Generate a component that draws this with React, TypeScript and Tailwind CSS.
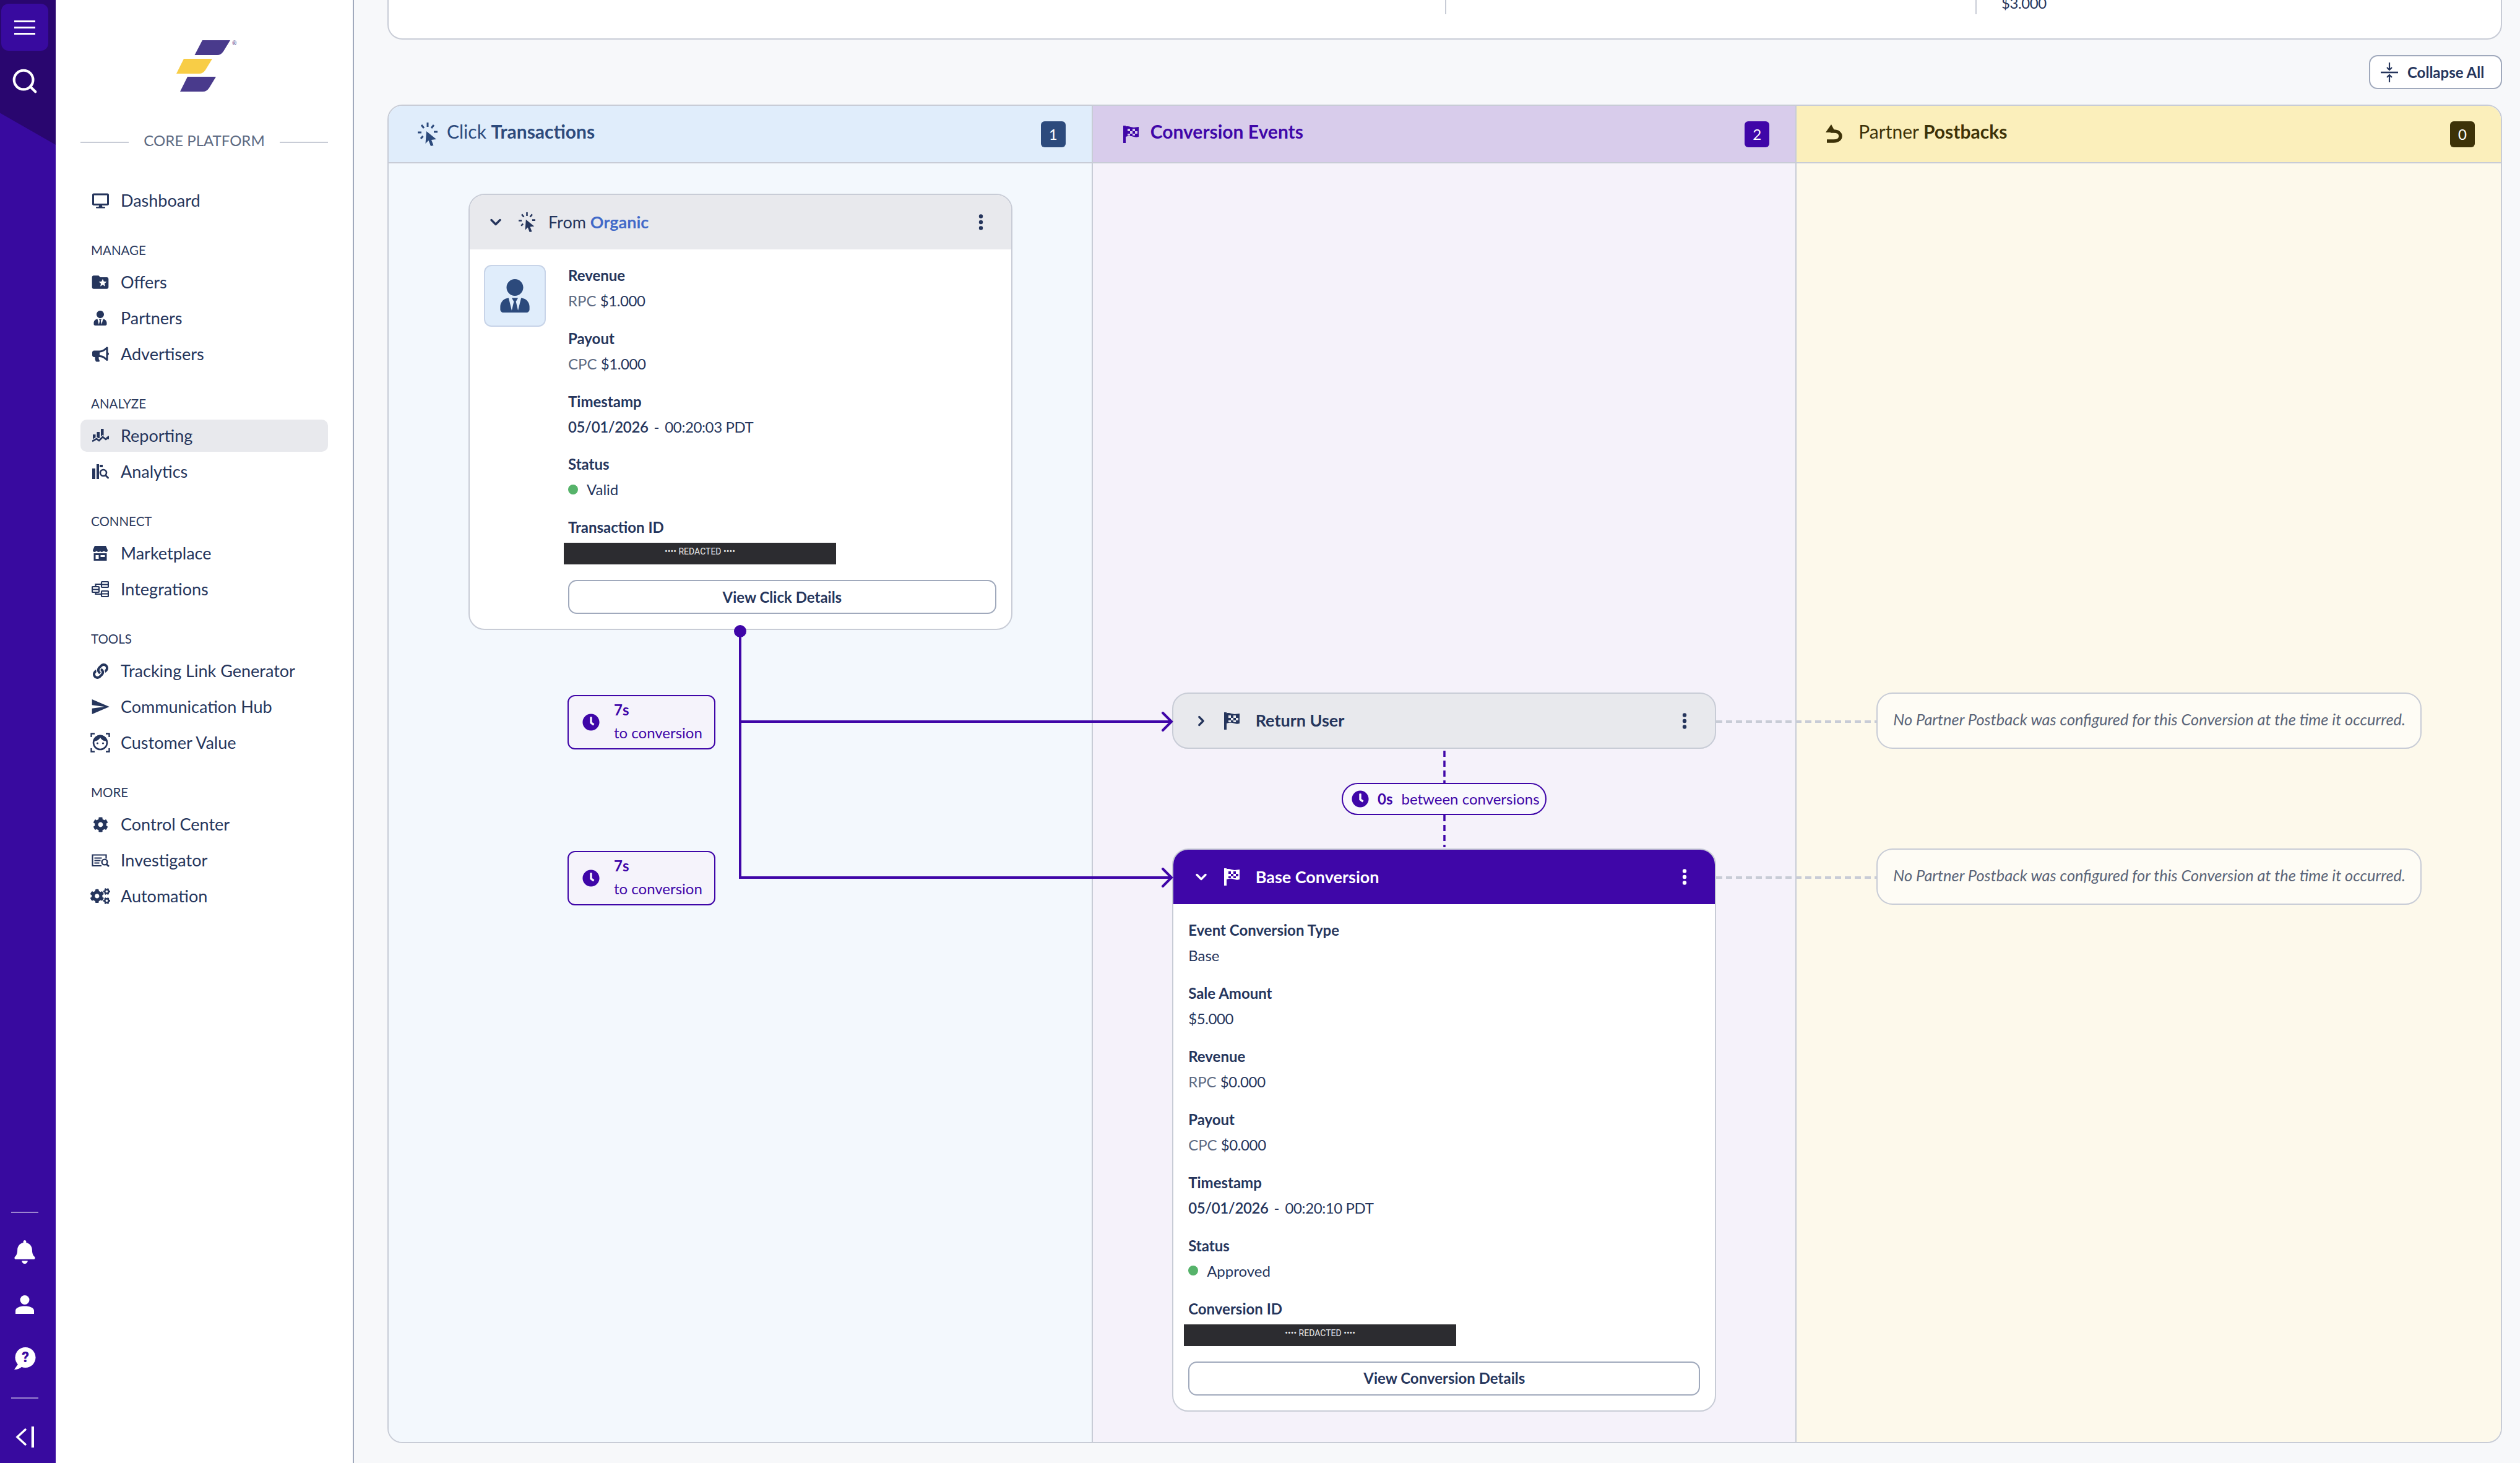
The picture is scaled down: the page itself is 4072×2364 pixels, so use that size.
import React from "react";
import {
  FaBell,
  FaBullhorn,
  FaClock,
  FaCog,
  FaCogs,
  FaDesktop,
  FaLink,
  FaUserTie,
} from "react-icons/fa";
import { MdFolderSpecial, MdSend } from "react-icons/md";
import { ChevronDown, ChevronRight, Search } from "lucide-react";

const PURPLE = "#3f06a8";
const NAVY = "#25355c";

// Small hand drawn icons
const ClickIcon = ({ width, height, color }: { width: number; height: number; color: string }) => (
  <svg width={width} height={height} viewBox="0 0 32 38" fill="none">
    <path
      d="M16 0v7M6 4l4 5M26 4l-4 5M0 16h6M5 26l3.500-4M26 15h6"
      stroke={color}
      strokeWidth="3"
    />
    <path d="M14 14l16 13-8 1 3.500 9-4.500 1-3.500-9-5 5z" fill={color} />
  </svg>
);

const FlagIcon = ({ color }: { color: string }) => (
  <svg width="25" height="28" viewBox="0 0 25 28" className="shrink-0">
    <rect x="0" y="0" width="4" height="28" fill={color} />
    <path
      fill={color}
      fillRule="evenodd"
      d="M4 1.500C9 0 12 3 17 3l8-1v16c-3 1-5 1-8 0-5-1.500-8-2-13 0zM7 5v4h4V5zM15 5v4h4V5zM11 9v4h4V9zM19 9v4h4V9zM7 13v3h4v-3zM15 13v3h4v-3z"
    />
  </svg>
);

const Kebab = ({ color }: { color: string }) => (
  <svg width="8" height="26" viewBox="0 0 8 26" fill={color}>
    <circle cx="4" cy="3.500" r="3.200" />
    <circle cx="4" cy="13" r="3.200" />
    <circle cx="4" cy="22.500" r="3.200" />
  </svg>
);

const ReportingIcon = () => (
  <svg width="27" height="22" viewBox="0 0 27 22" fill={NAVY}>
    <rect x="1" y="9" width="4.500" height="8" />
    <rect x="7.500" y="5" width="4.500" height="10" />
    <rect x="14" y="0" width="4.500" height="13" />
    <path d="M0 20l7-4 4 3 6-6 5 4 3-2" fill="none" stroke="#e8e9ed" strokeWidth="5" />
    <path d="M0 20l7-4 4 3 6-6 5 4 3-2" fill="none" stroke={NAVY} strokeWidth="2.600" />
    <path d="M27 11v6l-5-3z" />
  </svg>
);

const AnalyticsIcon = () => (
  <svg width="27" height="24" viewBox="0 0 27 24" fill="none">
    <rect x="0" y="7" width="5" height="17" fill={NAVY} />
    <rect x="7" y="0" width="4" height="24" fill={NAVY} />
    <rect x="12" y="1" width="5" height="4" fill={NAVY} />
    <circle cx="18" cy="14" r="5" stroke={NAVY} strokeWidth="2.600" />
    <path d="M21.500 18l5 5" stroke={NAVY} strokeWidth="2.800" />
  </svg>
);

const MarketplaceIcon = () => (
  <svg width="24" height="24" viewBox="0 0 24 24" fill={NAVY}>
    <path d="M3 0h18l3 7c0 2-1 3-2.500 3S19 9 18 8c-1 1-2.500 2-4 2s-1.500-1-2-2c-.5 1-1 2-2.500 2S7 9 6 8c-1 1-2 2-3.500 2S0 9 0 7z" />
    <path d="M1.500 12h21v12h-21zM4.500 15v6h5v-6zM12.500 15v3h7v-3z" fillRule="evenodd" />
  </svg>
);

const IntegrationsIcon = () => (
  <svg width="28" height="28" viewBox="0 0 28 28" fill="none" stroke={NAVY} strokeWidth="2.200">
    <rect x="1" y="10" width="11" height="9" rx="1" />
    <rect x="16" y="2" width="11" height="9" rx="1" />
    <rect x="16" y="17" width="11" height="9" rx="1" />
    <path d="M6.500 10V6h9.500M6.500 19v3h9.500M1 14.500h11M16 6.500h11M16 21.500h11" />
  </svg>
);

const CustomerIcon = () => (
  <svg width="32" height="32" viewBox="0 0 32 32" fill="none" stroke={NAVY}>
    <path d="M1.500 7V1.500H7M25 1.500h5.500V7M1.500 25v5.500H7M25 30.500h5.500V25" strokeWidth="2.400" />
    <circle cx="16" cy="16" r="11" strokeWidth="2.600" />
    <path d="M6 13c5 0 8-2 10-6 2 4 5 6 10 6-1-6-5-9-10-9S7 7 6 13z" fill={NAVY} />
    <circle cx="11.500" cy="17" r="1.600" fill={NAVY} stroke="none" />
    <circle cx="20.500" cy="17" r="1.600" fill={NAVY} stroke="none" />
  </svg>
);

const InvestigatorIcon = () => (
  <svg width="29" height="21" viewBox="0 0 29 21" fill="none" stroke={NAVY}>
    <path d="M16 19H1.500V1.500h22v6" strokeWidth="2.200" />
    <path d="M4.500 6.500h12M4.500 10.500h10M4.500 14.500h8" strokeWidth="1.800" />
    <circle cx="21" cy="13" r="4.400" strokeWidth="2.400" />
    <path d="M24 16.500l4 3.500" strokeWidth="2.800" />
  </svg>
);

const UndoIcon = () => (
  <svg width="28" height="31" viewBox="0 0 28 31" fill="none" className="shrink-0">
    <path d="M0 13L9 0l7 13z" fill="#3d3208" />
    <path d="M8 11h5c7 0 11 3.500 11 8s-4 8-11 8H2" stroke="#3d3208" strokeWidth="5.500" />
  </svg>
);

const CollapseIcon = () => (
  <svg width="28" height="32" viewBox="0 0 28 32" fill="none" stroke={NAVY} strokeWidth="2.200" className="shrink-0">
    <path d="M14 0v12M10 8l4 4 4-4M14 32V20M10 24l4-4 4 4" />
    <path d="M0 16h28" strokeWidth="2.600" />
  </svg>
);

const Logo = () => (
  <svg width="98" height="84" viewBox="285 65 98 84" className="ml-[195px] shrink-0">
    <path d="M327 65h45l-11 18q-4 6-10 6h-36.500z" fill="#493a8c" />
    <path d="M297 95h46l-11 18q-4 6-10 6h-37z" fill="#f8cd46" />
    <path d="M303 124h46l-11 18q-4 6-10 6h-37z" fill="#493a8c" />
    <text x="375" y="73" fontSize="9" fill="#493a8c" fontFamily="Lato">®</text>
  </svg>
);

// Sidebar data
interface NavItem {
  label: string;
  icon: React.ReactNode;
  active?: boolean;
}

interface NavGroup {
  title: string;
  items: NavItem[];
}

const navGroups: NavGroup[] = [
  {
    title: "MANAGE",
    items: [
      { label: "Offers", icon: <MdFolderSpecial size={32} color={NAVY} /> },
      { label: "Partners", icon: <FaUserTie size={24} color={NAVY} /> },
      { label: "Advertisers", icon: <FaBullhorn size={27} color={NAVY} /> },
    ],
  },
  {
    title: "ANALYZE",
    items: [
      { label: "Reporting", icon: <ReportingIcon />, active: true },
      { label: "Analytics", icon: <AnalyticsIcon /> },
    ],
  },
  {
    title: "CONNECT",
    items: [
      { label: "Marketplace", icon: <MarketplaceIcon /> },
      { label: "Integrations", icon: <IntegrationsIcon /> },
    ],
  },
  {
    title: "TOOLS",
    items: [
      { label: "Tracking Link Generator", icon: <FaLink size={25} color={NAVY} /> },
      { label: "Communication Hub", icon: <MdSend size={32} color={NAVY} /> },
      { label: "Customer Value", icon: <CustomerIcon /> },
    ],
  },
  {
    title: "MORE",
    items: [
      { label: "Control Center", icon: <FaCog size={25} color={NAVY} /> },
      { label: "Investigator", icon: <InvestigatorIcon /> },
      { label: "Automation", icon: <FaCogs size={32} color={NAVY} /> },
    ],
  },
];

const NavRow = ({ label, icon, active }: NavItem) => (
  <div
    className={`flex h-[52px] items-center gap-[15px] rounded-[10px] px-[14px] ${
      active ? "bg-[#e8e9ed]" : ""
    }`}
  >
    <span className="flex w-[36px] justify-center">{icon}</span>
    <span className="text-[27px] text-[#25355c]">{label}</span>
  </div>
);

const Rail = () => (
  <aside className="relative flex w-[90px] shrink-0 flex-col items-center bg-[#380a9f] pr-[10px]">
    <div className="absolute left-0 top-0 h-[234px] w-[90px] bg-[#29066f] [clip-path:polygon(0_0,100%_0,100%_100%,0_78%)]" />
    <button className="relative mt-[6px] flex h-[76px] w-[76px] flex-col items-center justify-center gap-[7px] rounded-[12px] bg-[#380a9f]">
      <span className="h-[3px] w-[34px] bg-white" />
      <span className="h-[3px] w-[34px] bg-white" />
      <span className="h-[3px] w-[34px] bg-white" />
    </button>
    <Search size={46} color="white" strokeWidth={2.200} className="relative mt-[26px]" />

    <div className="mt-auto h-[2px] w-[44px] bg-white/50" />
    <FaBell size={38} color="white" className="mt-[44px]" />
    <svg width="30" height="30" viewBox="0 0 30 30" fill="white" className="mt-[51px]">
      <circle cx="15" cy="7.500" r="7.500" />
      <path d="M0 30v-5c0-5 7-7.500 15-7.500s15 2.500 15 7.500v5z" />
    </svg>
    <svg width="36" height="36" viewBox="0 0 36 36" className="mt-[54px]">
      <circle cx="19" cy="16.500" r="16.500" fill="white" />
      <path d="M8 26L1 36c5 0 10-2 13-5z" fill="white" />
      <text x="19" y="24" textAnchor="middle" fontSize="23" fontWeight="900" fontFamily="Roboto" fill="#380a9f">?</text>
    </svg>
    <div className="mt-[45px] h-[2px] w-[44px] bg-white/50" />
    <svg width="30" height="34" viewBox="0 0 30 34" fill="none" stroke="white" strokeWidth="3.500" className="mb-[25px] mt-[45px]">
      <path d="M17 4L3 17l14 13" />
      <path d="M28 0v34" strokeWidth="4.500" />
    </svg>
  </aside>
);

const Sidebar = () => (
  <nav className="flex w-[482px] shrink-0 flex-col border-r-2 border-[#a0a9bc] bg-white pt-[65px]">
    <Logo />
    <div className="ml-[40px] mt-[63px] flex h-[30px] w-[400px] items-center gap-[24px]">
      <span className="mt-[6px] h-[2px] flex-1 bg-[#c8ccd6]" />
      <span className="text-[24px] text-[#5d6a82]">CORE PLATFORM</span>
      <span className="mt-[6px] h-[2px] flex-1 bg-[#c8ccd6]" />
    </div>
    <div className="ml-[40px] mt-[56px] w-[400px]">
      <NavRow label="Dashboard" icon={<FaDesktop size={27} color={NAVY} />} />
      {navGroups.map((group) => (
        <div key={group.title} className="mt-[41px]">
          <div className="mb-[13px] h-[26px] pl-[17px] text-[20.500px] leading-[26px] text-[#2b3a5e]">
            {group.title}
          </div>
          <div className="flex flex-col gap-[6px]">
            {group.items.map((item) => (
              <NavRow key={item.label} {...item} />
            ))}
          </div>
        </div>
      ))}
    </div>
  </nav>
);

// Transaction cards
const Field = ({ label, children }: { label: string; children: React.ReactNode }) => (
  <div>
    <div className="text-[24px] font-bold leading-[41px] text-[#25355c]">{label}</div>
    <div className="text-[24px] leading-[41px] text-[#25355c]">{children}</div>
  </div>
);

const Money = ({ prefix, value }: { prefix: string; value: string }) => (
  <>
    <span className="text-[#5d6a82]">{prefix}</span>{" "}
    <span className="tracking-[-0.4px]">{value}</span>
  </>
);

const Timestamp = ({ date, time }: { date: string; time: string }) => (
  <>
    <span className="font-semibold tracking-[-0.4px]">{date}</span>
    <span className="mx-[9px]">-</span>
    <span className="tracking-[-0.4px]">{time}</span>
  </>
);

const Status = ({ text }: { text: string }) => (
  <span className="flex items-center gap-[14px]">
    <span className="h-[16px] w-[16px] rounded-full bg-[#56b36a]" />
    {text}
  </span>
);

const IdField = ({ label }: { label: string }) => (
  <div>
    <div className="text-[24px] font-bold leading-[41px] text-[#25355c]">{label}</div>
    <div className="-ml-[7px] mt-[5px] h-[35px] w-[440px] bg-[#2c2c30] text-center font-['Roboto',sans-serif] text-[14px] leading-[28px] text-[#e8e8ea]">
      •••• REDACTED ••••
    </div>
  </div>
);

const DetailsButton = ({ text }: { text: string }) => (
  <button className="mt-[25px] h-[55px] w-full rounded-[14px] border-2 border-[#a0a9bc] bg-white text-[24px] font-bold text-[#25355c]">
    {text}
  </button>
);

const TimeBadge = ({ className }: { className: string }) => (
  <div
    className={`absolute left-[289px] flex h-[88px] w-[239px] items-center gap-[23px] rounded-[12px] border-2 border-[#3f06a8] bg-[#f5f3fb] pl-[22px] text-[#3f06a8] ${className}`}
  >
    <FaClock size={28} />
    <div className="-translate-y-[2px] text-[24px] leading-[37px]">
      <div className="font-bold">7s</div>
      <div>to conversion</div>
    </div>
  </div>
);

const ColumnHeader = ({
  icon,
  children,
  count,
  bg,
  badge,
  gap,
}: {
  icon: React.ReactNode;
  children: React.ReactNode;
  count: number;
  bg: string;
  badge: string;
  gap: string;
}) => (
  <div className={`flex h-[93px] items-center justify-between border-b-2 border-[#c8ccd6] pl-[47px] pr-[42px] ${bg}`}>
    <div className={`flex items-center text-[30px] ${gap}`}>
      {icon}
      <span className="-translate-y-[4px]">{children}</span>
    </div>
    <span className={`flex h-[42px] w-[40px] items-center justify-center rounded-[6px] text-[24px] text-white ${badge}`}>
      {count}
    </span>
  </div>
);

const NoPostback = () => (
  <div className="flex h-[91px] items-center rounded-[26px] border-2 border-[#c8ccd6] bg-[#fefcf5] pb-[4px] pl-[25px] text-[25.400px] italic text-[#5a6478]">
    No Partner Postback was configured for this Conversion at the time it occurred.
  </div>
);

// Lines that join the cards, drawn in page coordinates
const Connectors = () => (
  <svg width="3413" height="2159" className="pointer-events-none absolute left-0 top-0">
    <g transform="translate(-628 -171)" fill="none">
      <circle cx="1196" cy="1020" r="10" fill={PURPLE} />
      <g stroke={PURPLE} strokeWidth="4">
        <path d="M1196 1020V1420M1196 1166H1893M1194 1418H1893" />
        <path d="M1879 1152l14 14-14 14M1879 1404l14 14-14 14" strokeLinecap="round" />
      </g>
      <path d="M2334 1213V1265M2334 1317V1369" stroke={PURPLE} strokeWidth="3.500" strokeDasharray="10 6" />
      <path d="M2773 1166H3034M2773 1418H3034" stroke="#c8ccd6" strokeWidth="4" strokeDasharray="10 6" />
    </g>
  </svg>
);

const App: React.FC = () => {
  return (
    <div className="flex h-[2364px] w-[4072px] overflow-hidden bg-[#f7f8fa] font-['Lato',sans-serif]">
      <Rail />
      <Sidebar />

      <main className="flex-1 pl-[54px] pr-[29px]">
        {/* Bottom of the summary card that is scrolled away */}
        <div className="flex h-[64px] rounded-b-[24px] border-2 border-t-0 border-[#c8ccd6] bg-white">
          <div className="w-[1707px] shrink-0" />
          <div className="h-[23px] w-[857px] shrink-0 border-l-2 border-[#c8ccd6]" />
          <div className="flex h-[23px] items-end overflow-hidden border-l-2 border-[#c8ccd6] pl-[40px] text-[24px] leading-[28px] text-[#25355c]">
            <span className="shrink-0 -translate-y-[4px] tracking-[-0.4px]">$3.000</span>
          </div>
        </div>

        <div className="mt-[25px] flex justify-end">
          <button className="flex h-[55px] w-[215px] items-center gap-[15px] rounded-[14px] border-2 border-[#a0a9bc] bg-white pl-[17px] text-[24px] font-bold text-[#25355c]">
            <CollapseIcon />
            Collapse All
          </button>
        </div>

        <div className="relative mt-[25px] grid h-[2163px] grid-cols-3 overflow-hidden rounded-[24px] border-2 border-[#c8ccd6]">
          {/* Click Transactions */}
          <section className="flex flex-col border-r-2 border-[#c8ccd6] bg-[#f3f8fd]">
            <ColumnHeader
              icon={<ClickIcon width={32} height={38} color="#2c4a7c" />}
              count={1}
              bg="bg-[#e0edfb] text-[#2c4a7c]"
              badge="bg-[#2c4a7c]"
              gap="gap-[15px]"
            >
              Click <span className="font-bold">Transactions</span>
            </ColumnHeader>
            <div className="pl-[129px] pr-[128px] pt-[49px]">
              <div className="overflow-hidden rounded-[26px] border-2 border-[#c8ccd6] bg-white">
                <div className="flex h-[88px] items-center bg-[#e8e9ed] pl-[28px] pr-[45px]">
                  <ChevronDown size={28} strokeWidth={3} color={NAVY} className="shrink-0" />
                  <span className="ml-[23px]">
                    <ClickIcon width={27} height={34} color={NAVY} />
                  </span>
                  <span className="ml-[21px] flex-1 text-[27px] text-[#25355c]">
                    From <span className="font-bold text-[#4169c8]">Organic</span>
                  </span>
                  <Kebab color={NAVY} />
                </div>
                <div className="flex gap-[36px] pb-[24px] pl-[23px] pr-[24px] pt-[21px]">
                  <div className="mt-[4px] flex h-[100px] w-[100px] shrink-0 items-center justify-center rounded-[12px] border-2 border-[#c8d4e8] bg-[#e0edfb]">
                    <FaUserTie size={54} color="#2c4a7c" />
                  </div>
                  <div className="flex-1">
                    <div className="flex flex-col gap-[19.800px]">
                      <Field label="Revenue">
                        <Money prefix="RPC" value="$1.000" />
                      </Field>
                      <Field label="Payout">
                        <Money prefix="CPC" value="$1.000" />
                      </Field>
                      <Field label="Timestamp">
                        <Timestamp date="05/01/2026" time="00:20:03 PDT" />
                      </Field>
                      <Field label="Status">
                        <Status text="Valid" />
                      </Field>
                      <IdField label="Transaction ID" />
                    </div>
                    <DetailsButton text="View Click Details" />
                  </div>
                </div>
              </div>
            </div>
          </section>

          {/* Conversion Events */}
          <section className="flex flex-col border-r-2 border-[#c8ccd6] bg-[#f5f2fa]">
            <ColumnHeader
              icon={<span className="ml-[2px]"><FlagIcon color={PURPLE} /></span>}
              count={2}
              bg="bg-[#d8cceb] text-[#3f06a8]"
              badge="bg-[#3f06a8]"
              gap="gap-[19px]"
            >
              <span className="font-bold">Conversion Events</span>
            </ColumnHeader>
            <div className="flex flex-col items-stretch px-[128px] pt-[855px]">
              <div className="flex h-[91px] items-center rounded-[26px] border-2 border-[#c8ccd6] bg-[#e8e9ed] pl-[32px] pr-[45px]">
                <ChevronRight size={26} strokeWidth={3} color={NAVY} className="shrink-0" />
                <span className="ml-[24px]"><FlagIcon color={NAVY} /></span>
                <span className="ml-[26px] flex-1 text-[27px] font-bold text-[#25355c]">Return User</span>
                <Kebab color={NAVY} />
              </div>
              <div className="mx-auto mt-[55px] flex h-[52px] w-[331px] items-center rounded-full border-2 border-[#3f06a8] bg-[#f9f8fd] pl-[14px] text-[24px] text-[#3f06a8]">
                <FaClock size={28} />
                <span className="ml-[14px] font-bold">0s</span>
                <span className="ml-[14px]">between conversions</span>
              </div>
              <div className="mt-[54px] overflow-hidden rounded-[26px] border-2 border-[#c8ccd6] bg-white">
                <div className="flex h-[88px] items-center bg-[#3f06a8] pl-[31px] pr-[45px]">
                  <ChevronDown size={28} strokeWidth={3} color="white" className="shrink-0" />
                  <span className="ml-[23px]"><FlagIcon color="white" /></span>
                  <span className="ml-[26px] flex-1 text-[27px] font-bold text-white">Base Conversion</span>
                  <Kebab color="white" />
                </div>
                <div className="pb-[24px] pl-[24.500px] pr-[24px] pt-[20.500px]">
                  <div className="flex flex-col gap-[20px]">
                    <Field label="Event Conversion Type">Base</Field>
                    <Field label="Sale Amount">
                      <span className="tracking-[-0.4px]">$5.000</span>
                    </Field>
                    <Field label="Revenue">
                      <Money prefix="RPC" value="$0.000" />
                    </Field>
                    <Field label="Payout">
                      <Money prefix="CPC" value="$0.000" />
                    </Field>
                    <Field label="Timestamp">
                      <Timestamp date="05/01/2026" time="00:20:10 PDT" />
                    </Field>
                    <Field label="Status">
                      <Status text="Approved" />
                    </Field>
                    <IdField label="Conversion ID" />
                  </div>
                  <DetailsButton text="View Conversion Details" />
                </div>
              </div>
            </div>
          </section>

          {/* Partner Postbacks */}
          <section className="flex flex-col bg-[#fdf9eb]">
            <ColumnHeader
              icon={<UndoIcon />}
              count={0}
              bg="bg-[#fbefbb] text-[#3d3208]"
              badge="bg-[#3d3208]"
              gap="gap-[25px]"
            >
              Partner <span className="font-bold">Postbacks</span>
            </ColumnHeader>
            <div className="flex flex-col gap-[161px] pl-[129px] pr-[128px] pt-[855px]">
              <NoPostback />
              <NoPostback />
            </div>
          </section>

          <Connectors />
          <TimeBadge className="top-[952px]" />
          <TimeBadge className="top-[1204px]" />
        </div>
      </main>
    </div>
  );
};

export default App;
